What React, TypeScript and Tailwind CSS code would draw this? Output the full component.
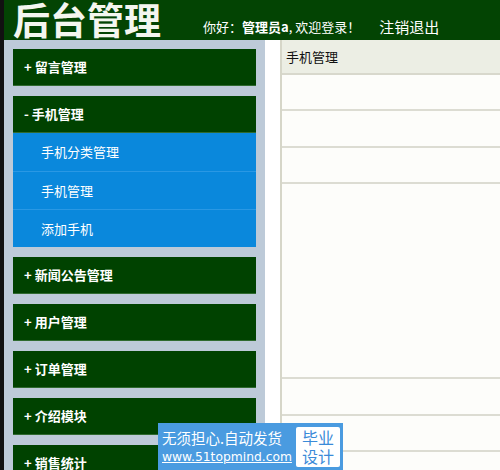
import React from 'react';

const menus = [
  { title: '留言管理', open: false, items: [] as string[] },
  { title: '手机管理', open: true, items: ['手机分类管理', '手机管理', '添加手机'] },
  { title: '新闻公告管理', open: false, items: [] },
  { title: '用户管理', open: false, items: [] },
  { title: '订单管理', open: false, items: [] },
  { title: '介绍模块', open: false, items: [] },
  { title: '销售统计', open: false, items: [] },
];

const rows = [36, 37, 36, 195, 37, 36, 36];

export default function App() {
  return (
    <div
      className="relative flex h-[470px] w-[500px] overflow-hidden bg-white"
      style={{ fontFamily: '"Noto Sans CJK SC", "Noto Sans", sans-serif' }}
    >
      <div className="w-[4px] shrink-0 bg-[#111]" />
      <div className="flex flex-1 flex-col">
        {/* top bar */}
        <div className="flex h-[40px] shrink-0 items-end bg-[#034403] text-white">
          <div className="ml-[9px] text-[37px] font-bold leading-[41px] text-[#f4f6ef]">后台管理</div>
          <div className="mb-[5px] ml-[42px] text-[13px] leading-[16px]">
            你好：<span className="font-bold">管理员a</span>, 欢迎登录！
          </div>
          <div className="mb-[4px] ml-[19px] text-[15px] leading-[18px]">注销退出</div>
        </div>

        <div className="flex flex-1">
          {/* sidebar */}
          <div className="flex w-[261px] shrink-0 flex-col gap-[10px] bg-[#bdcad8] px-[9px] pt-[9px]">
            {menus.map((m) => (
              <div key={m.title}>
                <div className="flex h-[37px] items-center border-b border-[#2f6a2f] bg-[#004200] pl-[11px] text-[13px] font-bold text-white">
                  {m.open ? '-' : '+'}&nbsp;{m.title}
                </div>
                {m.items.map((it, i) => (
                  <div
                    key={it}
                    className={`flex h-[38px] items-center bg-[#0a88dc] pl-[28px] text-[13px] text-white ${i > 0 ? 'border-t border-[#2a98e4]' : ''}`}
                  >
                    {it}
                  </div>
                ))}
              </div>
            ))}
          </div>

          <div className="w-[15px] shrink-0 bg-white" />

          {/* main */}
          <div className="flex flex-1 flex-col border-l-2 border-[#d6d6c8] bg-[#fdfdfa]">
            <div className="flex h-[35px] shrink-0 items-center border-b-2 border-[#d8d8cc] bg-[#eceee4] pl-[4px] text-[13px] text-[#111]">
              手机管理
            </div>
            {rows.map((h, i) => (
              <div key={i} className="shrink-0 border-b-2 border-[#dcdcd2]" style={{ height: h }} />
            ))}
          </div>
        </div>
      </div>

      {/* watermark */}
      <div className="absolute left-[158px] top-[423px] flex h-[47px] w-[185px] items-center bg-[#4a9be0] pl-[4px]">
        <div className="flex w-[131px] flex-col text-white">
          <span className="text-[14.5px] leading-[21px]">无须担心.自动发货</span>
          <span className="text-[12.3px] leading-[18px] underline" style={{ fontFamily: '"DejaVu Sans", sans-serif' }}>
            www.51topmind.com
          </span>
        </div>
        <div className="ml-[3px] flex h-[40px] w-[44px] flex-col items-center justify-center rounded-[2px] bg-white text-[16px] leading-[19px] text-[#3a8ad8]">
          <span>毕业</span>
          <span>设计</span>
        </div>
      </div>
    </div>
  );
}
